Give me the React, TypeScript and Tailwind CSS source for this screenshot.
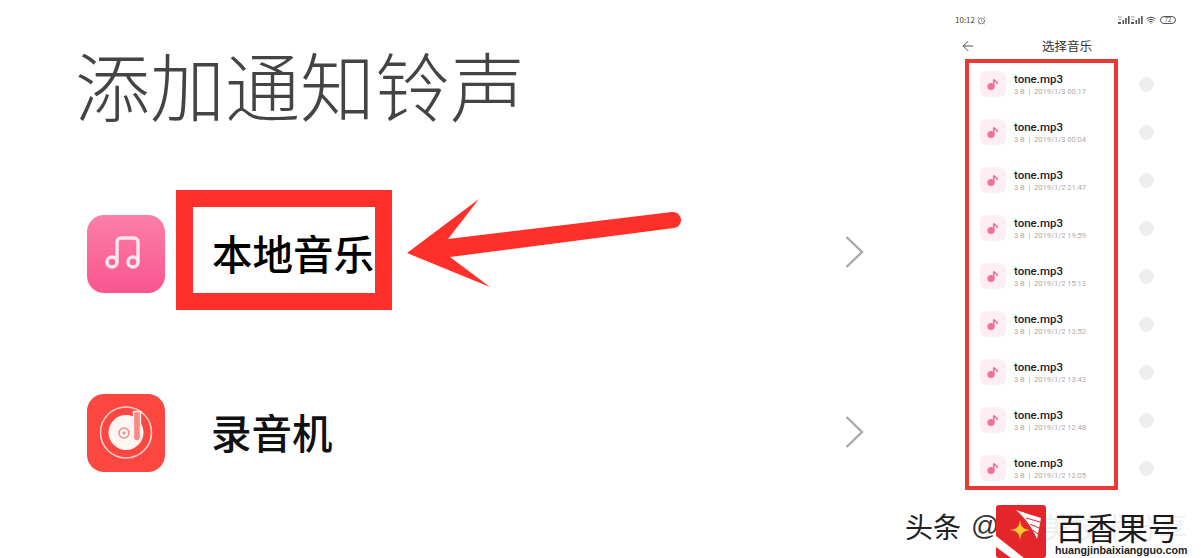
import React from 'react';
import { AlarmClock, ArrowLeft, Wifi } from 'lucide-react';

const cjk = "font-['Noto_Sans_CJK_SC','Noto_Sans',sans-serif]";

const tracks = [
  '2019/1/3 00:17',
  '2019/1/3 00:04',
  '2019/1/2 21:47',
  '2019/1/2 19:59',
  '2019/1/2 15:13',
  '2019/1/2 13:52',
  '2019/1/2 13:43',
  '2019/1/2 12:48',
  '2019/1/2 12:05',
];

const NoteIcon = () => (
  <svg viewBox="0 0 26 26" className="w-[26px] h-[26px] shrink-0">
    <rect width="26" height="26" rx="6" fill="#fdeef2" />
    <circle cx="11" cy="15.5" r="3.6" fill="#f0709c" />
    <path d="M13.7 15.5V8.5c.8 1.6 3 1.8 3.6 3.8" fill="none" stroke="#f0709c" strokeWidth="1.7" strokeLinecap="round" />
  </svg>
);

const MusicApp = () => (
  <svg viewBox="0 0 78 78" className="w-[78px] h-[78px] shrink-0 mt-[8px]">
    <defs>
      <linearGradient id="pink" x1="0" y1="0" x2="0" y2="1">
        <stop offset="0" stopColor="#fb7fa8" />
        <stop offset="1" stopColor="#f9558f" />
      </linearGradient>
    </defs>
    <rect width="78" height="78" rx="17" fill="url(#pink)" />
    <g fill="none" stroke="#fde6ee" strokeWidth="3.4">
      <circle cx="25" cy="47" r="5" />
      <circle cx="46" cy="47" r="5" />
      <path d="M30 47V27a4 4 0 0 1 4-4h13a4 4 0 0 1 4 4v20" />
    </g>
  </svg>
);

const RecorderApp = () => (
  <svg viewBox="0 0 78 78" className="w-[78px] h-[78px] shrink-0 mt-[2px]">
    <rect width="78" height="78" rx="17" fill="#fb4740" />
    <circle cx="39" cy="38.5" r="25.5" fill="none" stroke="#fdd0cc" strokeWidth="1.6" />
    <circle cx="39" cy="38.5" r="17.5" fill="#fff6f4" />
    <circle cx="37" cy="39" r="5" fill="none" stroke="#f58b84" strokeWidth="1.5" />
    <circle cx="37" cy="39" r="1.6" fill="#f58b84" />
    <path d="M46.5 17.5h7v26a3.5 3.5 0 0 1-7 0z" fill="#fb8a84" stroke="#fff0ee" strokeWidth="1.4" />
  </svg>
);

const Chevron = ({ className }: { className?: string }) => (
  <svg viewBox="0 0 20 34" className={`w-[20px] h-[34px] shrink-0 ${className ?? ''}`}>
    <path d="M2.5 2 L18 17 L2.5 32" fill="none" stroke="#aaaaaa" strokeWidth="2.4" />
  </svg>
);

const Signal = () => (
  <svg viewBox="0 0 12 8" className="w-[12px] h-[8px] text-[#555]">
    <g fill="currentColor">
      <rect x="0" y="0.5" width="3.5" height="1" opacity=".6" />
      <rect x="0.5" y="3" width="3" height="1" opacity=".6" />
      <rect x="0" y="6" width="3" height="2" />
      <rect x="4.5" y="4" width="1.6" height="4" />
      <rect x="7.2" y="2" width="1.6" height="6" />
      <rect x="10" y="0" width="1.6" height="8" />
    </g>
  </svg>
);

const Watermark = () => (
  <div className="absolute left-0 right-0 bottom-0 h-[56px]">
    <span className={`absolute left-[1042px] top-[6px] text-[29px] leading-[36px] text-[#efefef] whitespace-nowrap ${cjk}`}>美技术分享</span>
    <span className={`absolute left-[905px] top-[6px] text-[28px] leading-[36px] text-[#222] whitespace-nowrap ${cjk}`}>头条</span>
    <span className="absolute left-[971px] top-[6px] text-[28px] leading-[36px] text-[#333] font-['Liberation_Sans',sans-serif]">@</span>
    <svg viewBox="0 0 50 53" className="absolute left-[996px] top-[3px] w-[50px] h-[53px]">
      <rect width="50" height="53" rx="3" fill="#e4262b" />
      <path d="M0 31 L28 53 H15 L0 42z" fill="#fff" />
      <path d="M20 5 C30 8 38 11 45 13 L41 34 C36 22 29 13 20 5z" fill="#fff" />
      <path d="M30 13 L44 17 M34 19 L43 23 M37 25 L42 29" stroke="#e4262b" strokeWidth="1" />
      <path d="M24 15 C25 22 27 24 34 25 C27 26 25 28 24 35 C23 28 21 26 14 25 C21 24 23 22 24 15z" fill="#fbc531" />
    </svg>
    <span className={`absolute left-[1055px] top-[5px] text-[31px] leading-[40px] text-[#1a1a1a] whitespace-nowrap ${cjk}`}>百香果号</span>
    <span className="absolute left-[1055px] top-[41px] text-[10.7px] leading-[14px] font-bold text-[#222] whitespace-nowrap font-['Liberation_Sans',sans-serif]">huangjinbaixiangguo.com</span>
  </div>
);

export default function App() {
  return (
    <div className={`relative w-[1201px] h-[558px] overflow-hidden bg-white flex ${cjk}`}>
      {/* left: settings page */}
      <div className="w-[945px] shrink-0 pl-[78px] flex flex-col">
        <h1 className="mt-[37px] -ml-[3px] text-[75px] leading-[94px] font-light text-[#444] whitespace-nowrap">添加通知铃声</h1>

        <div className="mt-[59px] h-[120px] flex items-center pl-[9px]">
          <MusicApp />
          <div className="ml-[11px] w-[216px] h-[120px] shrink-0 border-[17px] border-[#ff3029] flex items-center pl-[19px] pt-[6px]">
            <span className="text-[40.5px] leading-none font-medium text-black whitespace-nowrap">本地音乐</span>
          </div>
          <Chevron className="ml-[452px] mt-[4px]" />
        </div>

        <div className="mt-[62px] h-[120px] flex items-center pl-[9px]">
          <RecorderApp />
          <span className="ml-[46px] w-[560px] shrink-0 text-[40.5px] leading-none font-medium text-[#111] whitespace-nowrap">录音机</span>
          <Chevron className="ml-[73px]" />
        </div>
      </div>

      {/* right: phone screen */}
      <div className="relative flex-1 pl-[10px] pr-[25px] flex flex-col">
        <div className="mt-[14px] h-[12px] flex items-center justify-between text-[8px] leading-none text-[#444]">
          <div className="flex items-center gap-[2px]">
            <span>10:12</span>
            <AlarmClock className="w-[9px] h-[9px]" strokeWidth={1.6} />
          </div>
          <div className="flex items-center">
            <Signal />
            <span className="ml-[1px]"><Signal /></span>
            <Wifi className="ml-[3px] w-[10px] h-[10px]" strokeWidth={2.4} />
            <span className="ml-[4px] w-[16px] h-[8px] rounded-full border border-[#555] text-[6px] leading-[6px] text-center">72</span>
          </div>
        </div>

        <div className="mt-[8px] h-[24px] flex items-center">
          <ArrowLeft className="ml-[5px] w-[16px] h-[16px] text-[#333]" strokeWidth={1.3} />
          <span className="ml-[66px] text-[12.5px] leading-none text-[#333] whitespace-nowrap">选择音乐</span>
        </div>

        <div className="relative mt-[1px] pt-[1px]">
          <div className="flex flex-col">
            {tracks.map((t) => (
              <div key={t} className="h-[48px] flex items-center pl-[25px]">
                <NoteIcon />
                <div className="ml-[8px] mt-[1px] flex flex-col gap-[1px] font-['Roboto',sans-serif]">
                  <span className="text-[11.5px] leading-[13px] font-medium text-[#222] whitespace-nowrap">tone.mp3</span>
                  <span className="text-[7.5px] leading-[10px] text-[#aaa] whitespace-nowrap">3 B&nbsp;&nbsp;|&nbsp;&nbsp;{t}</span>
                </div>
                <span className="ml-auto mr-[22px] w-[15px] h-[15px] rounded-full bg-[#eeeeee]" />
              </div>
            ))}
          </div>
          <div className="absolute left-[10px] top-0 w-[153px] h-[431px] border-[4px] border-[#e73a33]" />
        </div>
      </div>

      {/* arrow annotation */}
      <svg viewBox="0 0 1201 558" className="absolute inset-0 w-[1201px] h-[558px] pointer-events-none">
        <path d="M407 253 L479 199 L448 239 L672 212 A8 8 0 0 1 674 228 L450 257 L490 287 Z" fill="#ff3029" />
      </svg>

      <Watermark />
    </div>
  );
}
